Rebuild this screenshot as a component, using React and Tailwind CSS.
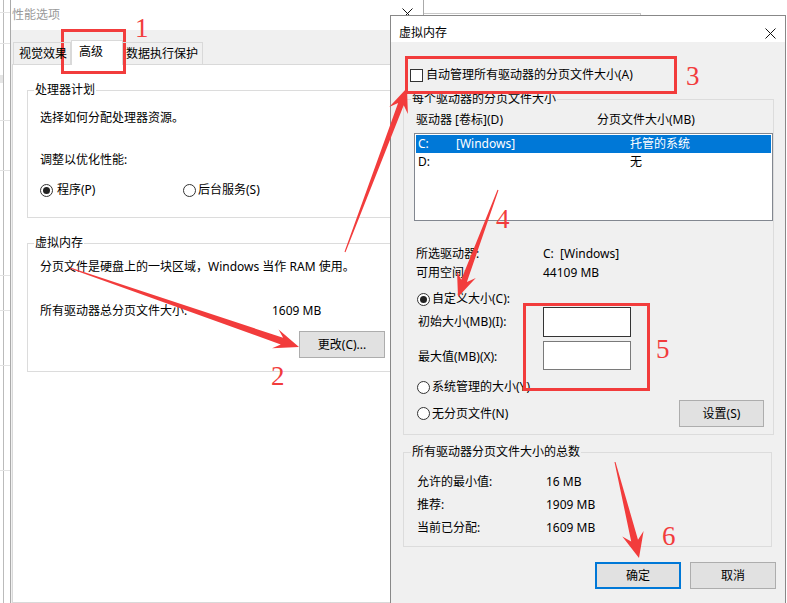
import React from 'react';

const FONT = "font-['Noto_Sans','Noto_Sans_CJK_SC',sans-serif]";

const Radio = ({ checked }) => (
  <span className="w-[13px] h-[13px] rounded-full border border-[#333] bg-white flex items-center justify-center shrink-0">
    {checked && <span className="w-[7px] h-[7px] rounded-full bg-[#222]" />}
  </span>
);

const CloseX = ({ className }) => (
  <svg width="11" height="11" viewBox="0 0 11 11" className={className}>
    <path d="M0.5 0.5 L10.5 10.5 M10.5 0.5 L0.5 10.5" stroke="#111" strokeWidth="1" fill="none" />
  </svg>
);

const WinButton = ({ children, className = '' }) => (
  <div className={`h-[27px] flex items-center justify-center bg-[#e1e1e1] border border-[#adadad] ${className}`}>
    {children}
  </div>
);

// tapered annotation arrow
const arrowPts = (x1, y1, x2, y2, L, W, t0, t1) => {
  const dx = x2 - x1;
  const dy = y2 - y1;
  const len = Math.hypot(dx, dy);
  const ux = dx / len;
  const uy = dy / len;
  const nx = -uy;
  const ny = ux;
  const sx = x2 - ux * L * 0.72;
  const sy = y2 - uy * L * 0.72;
  const cx = x2 - ux * L;
  const cy = y2 - uy * L;
  const pts = [
    [x1 + (nx * t0) / 2, y1 + (ny * t0) / 2],
    [sx + (nx * t1) / 2, sy + (ny * t1) / 2],
    [cx + nx * W, cy + ny * W],
    [x2, y2],
    [cx - nx * W, cy - ny * W],
    [sx - (nx * t1) / 2, sy - (ny * t1) / 2],
    [x1 - (nx * t0) / 2, y1 - (ny * t0) / 2],
  ];
  return pts.map((p) => p.map((v) => v.toFixed(1)).join(',')).join(' ');
};

const arrows = [
  [70, 268, 299, 347, 25, 10, 1, 7],
  [345, 252, 407, 88, 24, 10, 1, 6],
  [498, 190, 458, 297, 24, 10, 1, 6],
  [615, 462, 639, 558, 25, 11, 1, 7],
];

const numbers = [
  { n: '1', x: 135, y: 15 },
  { n: '2', x: 271, y: 363 },
  { n: '3', x: 686, y: 63 },
  { n: '4', x: 496, y: 206 },
  { n: '5', x: 656, y: 336 },
  { n: '6', x: 662, y: 523 },
];

const PerfOptions = () => (
  <div className="absolute left-[10px] top-0 w-[414px] h-[603px] border-x border-[#aaa] bg-[#f0f0f0] flex flex-col">
    <div className="h-[30px] bg-white flex items-center justify-between pl-[1px] pr-[10px]">
      <span className="text-[#999]">性能选项</span>
      <CloseX className="-mt-[4px]" />
    </div>
    <div className="mt-[10px] h-[24px] pl-[2px] flex items-end relative z-10">
      <div className="w-[58px] h-[22px] border border-b-0 border-[#d9d9d9] pl-[5px] leading-[22px]">视觉效果</div>
      <div className="w-[52px] h-[25px] -mb-px bg-white border border-b-0 border-[#d9d9d9] pl-[7px] leading-[22px]">高级</div>
      <div className="w-[80px] h-[22px] border border-b-0 border-l-0 border-[#d9d9d9] pl-[3px] leading-[22px]">数据执行保护</div>
    </div>
    <div className="flex-1 ml-[1px] mr-[2px] bg-white border border-[#d9d9d9] pt-[17px] px-[14px]">
      <fieldset className="border border-[#dcdcdc] pb-[19px]">
        <legend className="ml-[6px] px-[1px] leading-[16px]">处理器计划</legend>
        <div className="pl-[12px] mt-[12px]">选择如何分配处理器资源。</div>
        <div className="pl-[12px] mt-[26px]">调整以优化性能:</div>
        <div className="pl-[12px] mt-[14px] flex items-center h-[16px]">
          <Radio checked />
          <span className="ml-[4px] w-[126px]">程序(P)</span>
          <Radio />
          <span className="ml-[2px]">后台服务(S)</span>
        </div>
      </fieldset>
      <fieldset className="mt-[17px] border border-[#dcdcdc] pb-[13px] pr-[20px]">
        <legend className="ml-[6px] px-[1px] leading-[16px]">虚拟内存</legend>
        <div className="pl-[12px] mt-[8px]">分页文件是硬盘上的一块区域，Windows 当作 RAM 使用。</div>
        <div className="pl-[12px] mt-[28px] flex">
          <span className="w-[232px]">所有驱动器总分页文件大小:</span>
          <span>1609 MB</span>
        </div>
        <div className="mt-[12px] flex justify-end">
          <WinButton className="w-[86px]">更改(C)...</WinButton>
        </div>
      </fieldset>
    </div>
  </div>
);

const VirtualMemory = () => (
  <div className="absolute left-[390px] top-[15px] w-[396px] h-[600px] border border-[#888] bg-[#f0f0f0] flex flex-col">
    <div className="h-[26px] bg-white flex items-start justify-between pl-[8px] pr-[9px] pt-[9px]">
      <span className="leading-[16px]">虚拟内存</span>
      <CloseX className="mt-[3px]" />
    </div>
    <div className="mt-[25px] pl-[19px] flex items-center h-[16px]">
      <span className="w-[13px] h-[13px] border border-[#333] bg-white shrink-0" />
      <span className="ml-[3px]">自动管理所有驱动器的分页文件大小(A)</span>
    </div>
    <fieldset className="mt-[8px] ml-[12px] mr-[13px] border border-[#dcdcdc] pb-[7px]">
      <legend className="ml-[7px] px-[1px] leading-[16px]">每个驱动器的分页文件大小</legend>
      <div className="mt-[5px] pl-[12px] flex">
        <span className="w-[181px]">驱动器 [卷标](D)</span>
        <span>分页文件大小(MB)</span>
      </div>
      <div className="mt-[5px] ml-[10px] w-[359px] h-[88px] bg-white border border-[#828790] p-[1px]">
        <div className="h-[18px] leading-[18px] bg-[#0078d7] text-white flex pl-[2px]">
          <span className="w-[38px]">C:</span>
          <span className="w-[174px]">[Windows]</span>
          <span>托管的系统</span>
        </div>
        <div className="h-[18px] leading-[18px] flex pl-[2px]">
          <span className="w-[212px]">D:</span>
          <span>无</span>
        </div>
      </div>
      <div className="mt-[23px] pl-[12px] leading-[19px]">
        <div className="flex">
          <span className="w-[127px]">所选驱动器:</span>
          <span>C:&nbsp;&nbsp;[Windows]</span>
        </div>
        <div className="flex">
          <span className="w-[127px]">可用空间:</span>
          <span>44109 MB</span>
        </div>
      </div>
      <div className="mt-[9px] pl-[13px] flex items-center h-[16px]">
        <Radio checked />
        <span className="ml-[2px]">自定义大小(C):</span>
      </div>
      <div className="pl-[14px] flex items-center h-[30px]">
        <span className="w-[125px]">初始大小(MB)(I):</span>
        <div className="w-[88px] h-[30px] bg-white border border-[#333]" />
      </div>
      <div className="mt-[4px] pl-[14px] flex items-center h-[29px]">
        <span className="w-[125px] mt-[3px]">最大值(MB)(X):</span>
        <div className="w-[88px] h-[29px] bg-white border border-[#7a7a7a]" />
      </div>
      <div className="mt-[9px] pl-[13px] flex items-center h-[16px]">
        <Radio />
        <span className="ml-[2px]">系统管理的大小(Y)</span>
      </div>
      <div className="mt-[5px] pl-[13px] pr-[9px] flex items-center justify-between h-[27px]">
        <div className="flex items-center">
          <Radio />
          <span className="ml-[2px]">无分页文件(N)</span>
        </div>
        <WinButton className="w-[85px]">设置(S)</WinButton>
      </div>
    </fieldset>
    <fieldset className="mt-[9px] ml-[12px] mr-[13px] border border-[#dcdcdc] pb-[7px]">
      <legend className="ml-[7px] px-[1px] leading-[16px]">所有驱动器分页文件大小的总数</legend>
      <div className="mt-[10px] pl-[13px] leading-[23px]">
        <div className="flex">
          <span className="w-[129px]">允许的最小值:</span>
          <span>16 MB</span>
        </div>
        <div className="flex">
          <span className="w-[129px]">推荐:</span>
          <span>1909 MB</span>
        </div>
        <div className="flex">
          <span className="w-[129px]">当前已分配:</span>
          <span>1609 MB</span>
        </div>
      </div>
    </fieldset>
    <div className="mt-[15px] pr-[9px] flex justify-end gap-[9px]">
      <div className="w-[86px] h-[27px] flex items-center justify-center bg-[#e1e1e1] border-2 border-[#0078d7]">确定</div>
      <WinButton className="w-[86px]">取消</WinButton>
    </div>
  </div>
);

export default function App() {
  return (
    <div className={`relative w-[787px] h-[603px] overflow-hidden bg-white text-black text-[12px] leading-[16px] ${FONT}`}>
      {/* window behind, left sliver */}
      <div className="absolute left-0 top-0 w-[10px] h-full">
        <div className="absolute left-[3px] top-0 w-px h-full bg-[#bbb]" />
        {[12, 43, 120, 170, 275, 310, 365, 470].map((y) => (
          <div key={y} className="absolute left-0 w-[10px] h-px bg-[#e3e3e3]" style={{ top: y }} />
        ))}
        <div className="absolute left-0 top-[75px] w-[3px] h-[8px] bg-[#e5e5e5]" />
      </div>
      {/* window behind, top edge */}
      <div className="absolute left-[423px] top-[13px] w-[218px] h-[6px] border-t border-r border-[#c8c8c8]" />

      <PerfOptions />
      <VirtualMemory />

      {/* annotations */}
      <svg className="absolute inset-0 pointer-events-none" width="787" height="603">
        <g fill="none" stroke="#f23c3c" strokeWidth="3">
          <rect x="62.5" y="30.5" width="62" height="42" />
          <rect x="406.5" y="57.5" width="269" height="35" />
          <rect x="524.5" y="304.5" width="124" height="85" />
        </g>
        {arrows.map((a, i) => (
          <polygon key={i} points={arrowPts(...a)} fill="#f23c3c" />
        ))}
      </svg>
      {numbers.map((d) => (
        <span
          key={d.n}
          className="absolute text-[27px] leading-[27px] text-[#f23c3c] font-['Liberation_Serif',serif]"
          style={{ left: d.x, top: d.y }}
        >
          {d.n}
        </span>
      ))}
    </div>
  );
}
